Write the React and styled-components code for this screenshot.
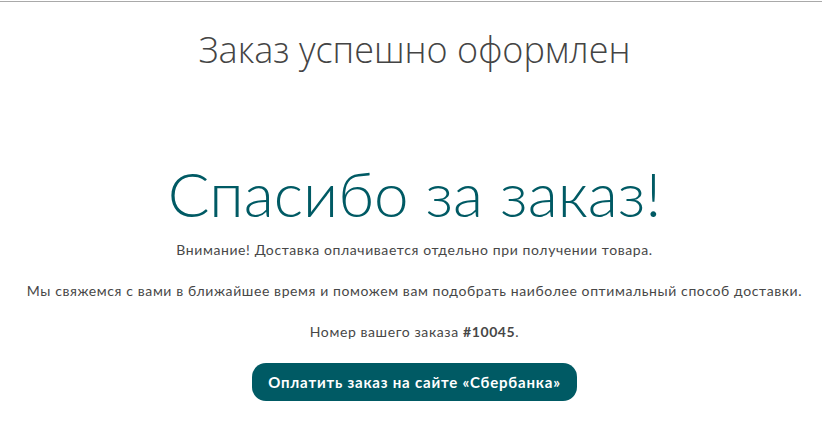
import styled, { createGlobalStyle } from "styled-components";

const GlobalStyle = createGlobalStyle`
  body {
    margin: 0;
    background: #fff;
    font-family: Lato, "Open Sans", sans-serif;
  }
`;

const Page = styled.div`
  border-top: 1px solid #a9a9a9;
  margin-top: 1px;
  padding-left: 7px;
  display: flex;
  flex-direction: column;
  align-items: center;
`;

const Title = styled.h1`
  margin: 24px 0 0;
  font-family: "Open Sans", sans-serif;
  font-weight: 300;
  font-size: 36px;
  line-height: 48px;
  color: #444;
`;

const Thanks = styled.h2`
  margin: 83px 0 0;
  font-family: Lato, sans-serif;
  font-weight: 300;
  font-size: 62px;
  line-height: 72px;
  color: #005a64;
`;

const Text = styled.p`
  margin: ${(p) => p.$top || 0}px 0 0;
  font-size: 14px;
  line-height: 20px;
  letter-spacing: 0.6px;
  color: #474747;
  text-align: center;
`;

const PayButton = styled.button`
  margin-top: 21px;
  height: 38px;
  padding: 0 16px;
  border: none;
  border-radius: 14px;
  background: #005a64;
  color: #fff;
  font-family: Lato, sans-serif;
  font-weight: 700;
  font-size: 15px;
  letter-spacing: 0.8px;
  cursor: pointer;
`;

const App = () => {
  return (
    <>
      <GlobalStyle />
      <Page>
        <Title>Заказ успешно оформлен</Title>
        <Thanks>Спасибо за заказ!</Thanks>
        <Text $top={11}>Внимание! Доставка оплачивается отдельно при получении товара.</Text>
        <Text $top={21}>
          Мы свяжемся с вами в ближайшее время и поможем вам подобрать наиболее оптимальный способ доставки.
        </Text>
        <Text $top={21}>
          Номер вашего заказа <b>#10045</b>.
        </Text>
        <PayButton>Оплатить заказ на сайте «Сбербанка»</PayButton>
      </Page>
    </>
  );
};

export default App;
